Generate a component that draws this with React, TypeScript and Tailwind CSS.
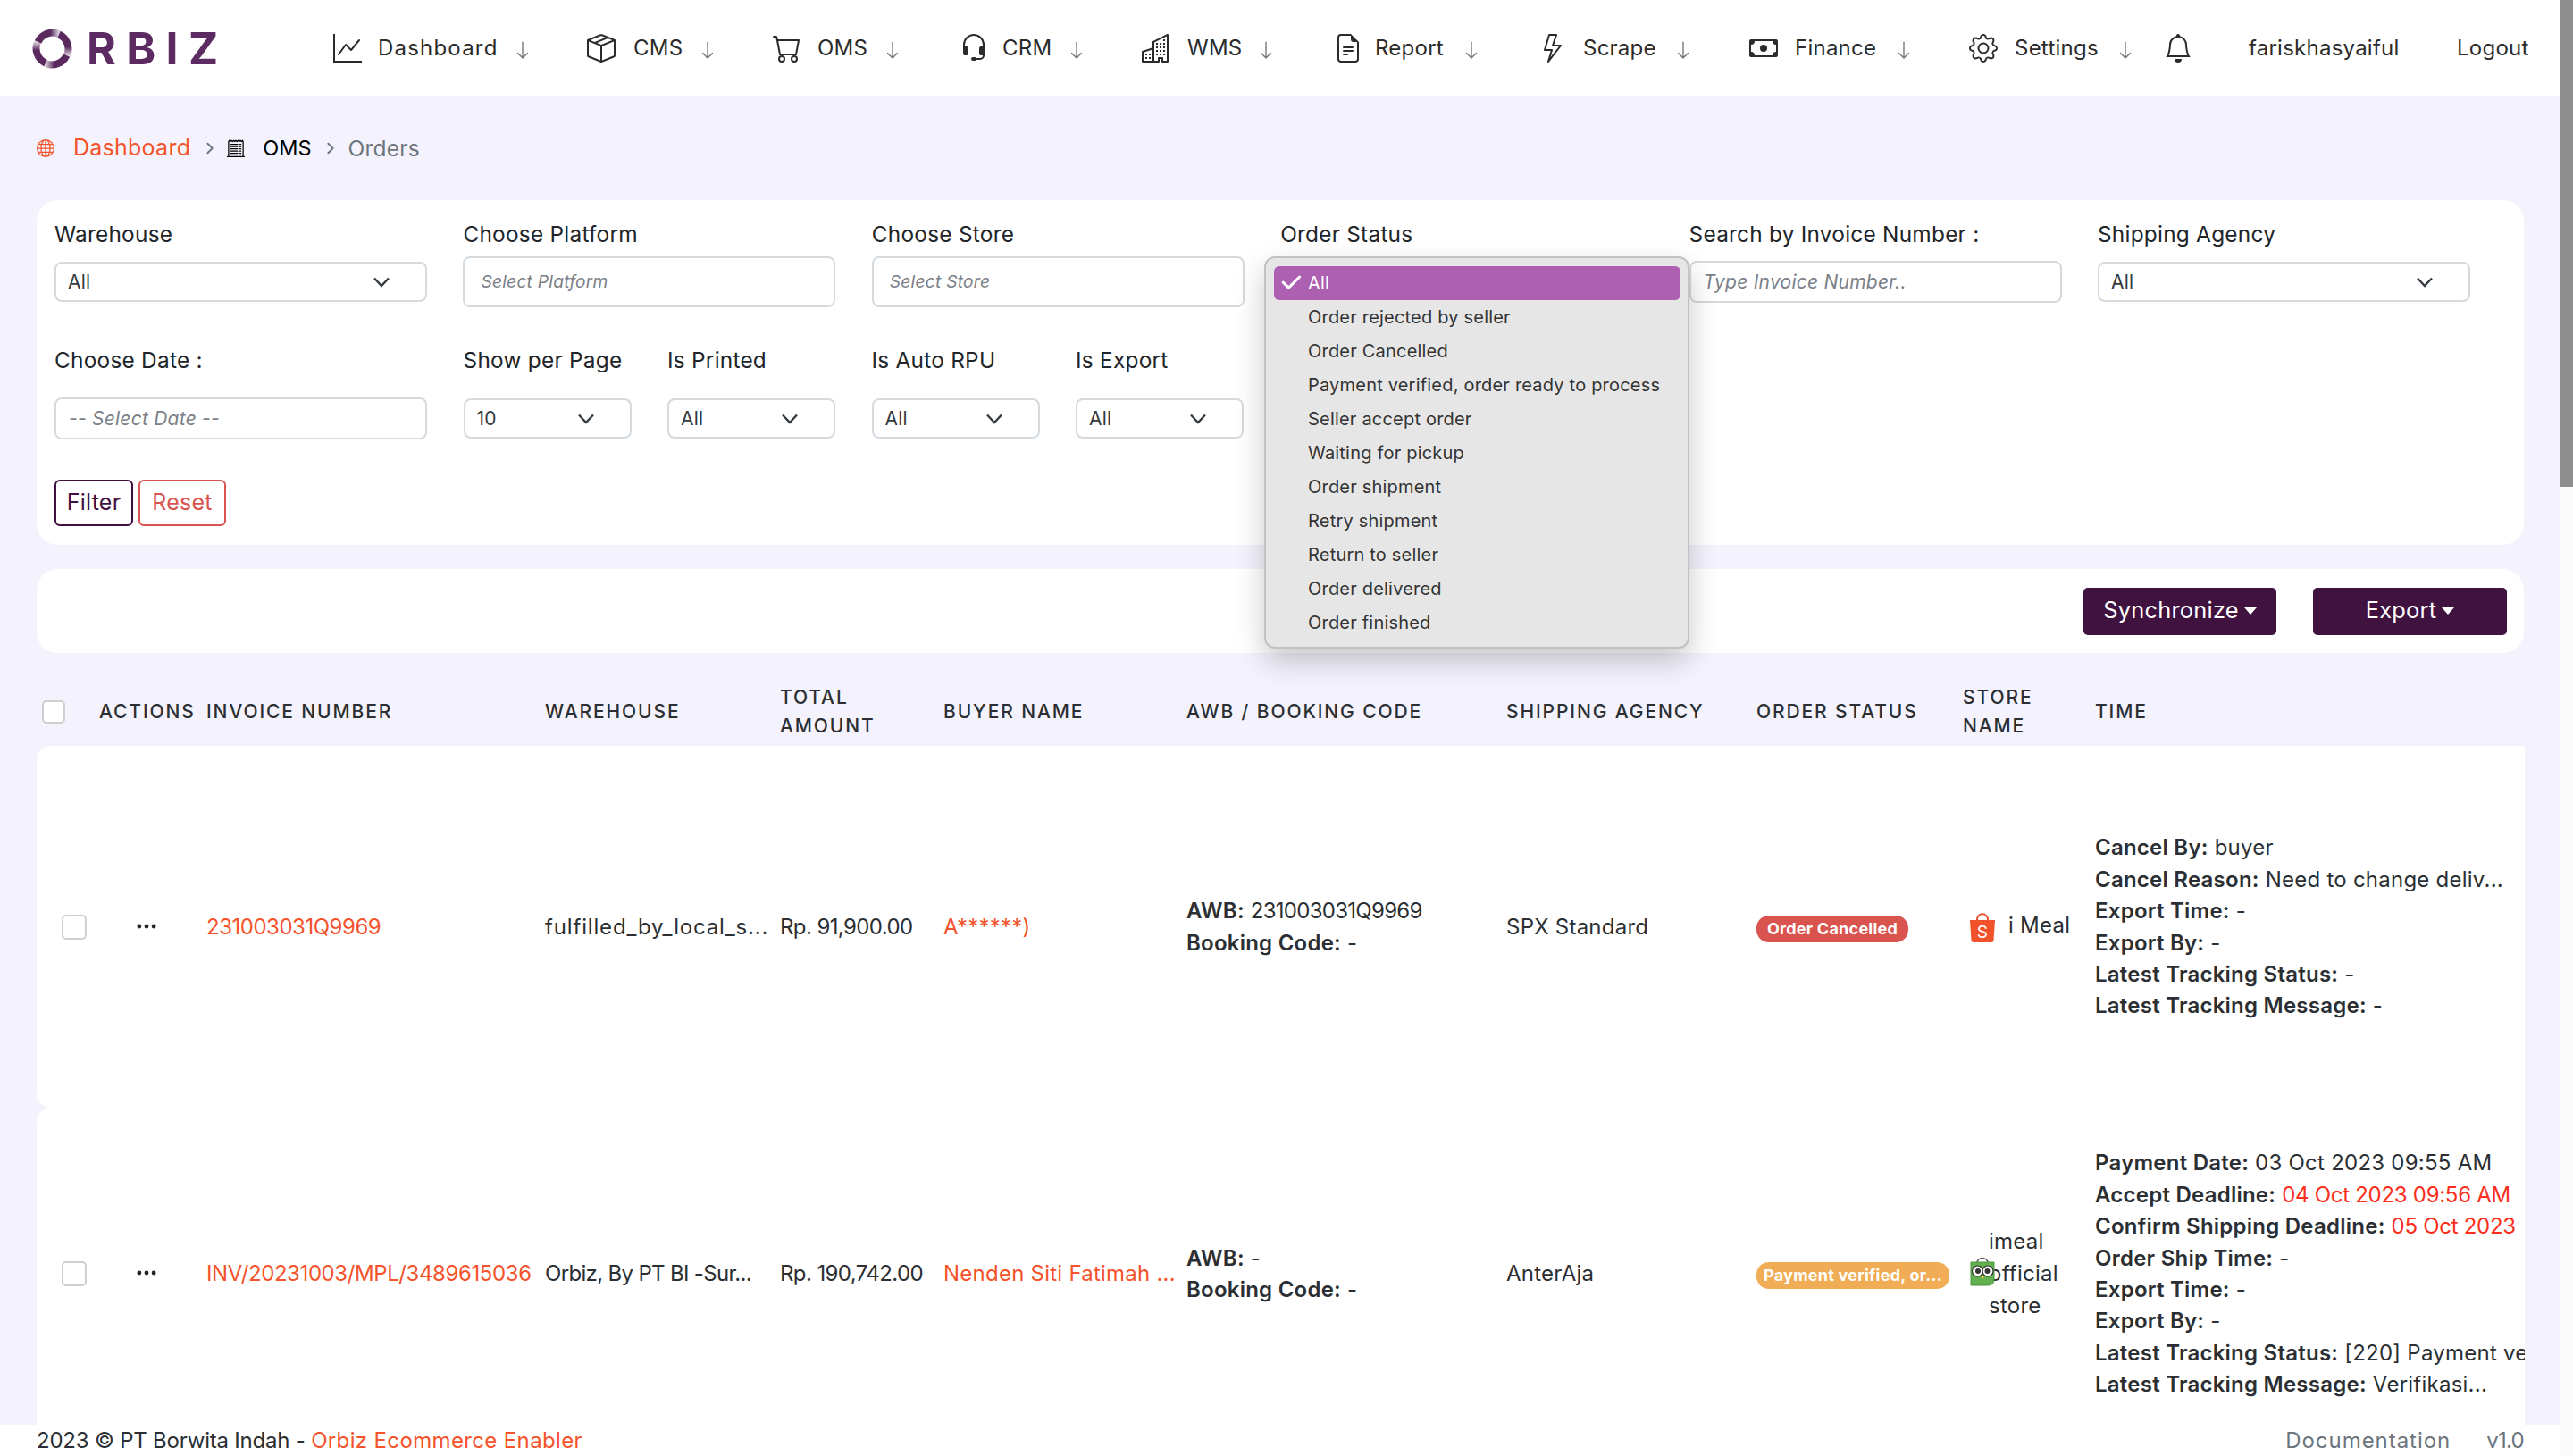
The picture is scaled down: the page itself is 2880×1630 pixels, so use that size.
import {
  BsArrowDown,
  BsBell,
  BsBoxSeam,
  BsBuildings,
  BsCart,
  BsCash,
  BsCheck2,
  BsChevronRight,
  BsFileEarmarkText,
  BsGear,
  BsGlobe,
  BsGraphUp,
  BsHeadset,
  BsLightning,
  BsReceiptCutoff,
  BsThreeDots,
} from "react-icons/bs";

const NAV = [
  { label: "Dashboard", Icon: BsGraphUp, box: "w-[284px] grid-cols-[50px_151px_22px]", icon: "", text: "tracking-[0.05em]" },
  { label: "CMS", Icon: BsBoxSeam, box: "w-[208px] grid-cols-[52px_72px_22px]", icon: "", text: "" },
  { label: "OMS", Icon: BsCart, box: "w-[209px] grid-cols-[50px_73px_22px]", icon: "", text: "" },
  { label: "CRM", Icon: BsHeadset, box: "w-[204px] grid-cols-[48px_72px_22px]", icon: "", text: "" },
  { label: "WMS", Icon: BsBuildings, box: "w-[215px] grid-cols-[51px_77px_22px]", icon: "", text: "" },
  { label: "Report", Icon: BsFileEarmarkText, box: "w-[233px] grid-cols-[46px_97px_22px]", icon: "", text: "" },
  { label: "Scrape", Icon: BsLightning, box: "w-[232px] grid-cols-[46px_101px_22px]", icon: "-ml-[4px]", text: "" },
  { label: "Finance", Icon: BsCash, box: "w-[246px] grid-cols-[51px_111px_22px]", icon: "", text: "" },
  { label: "Settings", Icon: BsGear, box: "w-[218px] grid-cols-[51px_113px_22px]", icon: "", text: "" },
];

const STATUSES = [
  "Order rejected by seller",
  "Order Cancelled",
  "Payment verified, order ready to process",
  "Seller accept order",
  "Waiting for pickup",
  "Order shipment",
  "Retry shipment",
  "Return to seller",
  "Order delivered",
  "Order finished",
];

function Logo() {
  const arcs = [0, 90, 180, 270];
  return (
    <div className="flex items-center ml-[36px] w-[337px]">
      <svg width="45" height="45" viewBox="0 0 45 45">
        <defs>
          <linearGradient id="fade" x1="0" y1="0" x2="1" y2="0">
            <stop offset="0" stopColor="#5a2a5e" />
            <stop offset="0.6" stopColor="#5a2a5e" />
            <stop offset="1" stopColor="#ddd2df" />
          </linearGradient>
        </defs>
        {arcs.map((deg) => (
          <path
            key={deg}
            d="M6.5 15 A18 18 0 0 1 30 6"
            fill="none"
            stroke="url(#fade)"
            strokeWidth="8"
            transform={`rotate(${deg} 22.5 22.5)`}
          />
        ))}
      </svg>
      <span className="ml-[16px] text-[50px] leading-none font-bold tracking-[0.227em] text-[#5c2b62]">RBIZ</span>
    </div>
  );
}

function NavBar() {
  return (
    <nav className="h-[108px] shrink-0 bg-white flex items-center text-[24px] text-[#2b2b2b]">
      <Logo />
      {NAV.map(({ label, Icon, box, icon, text }) => (
        <div key={label} className={`grid items-center ${box}`}>
          <Icon size={32} className={`text-[#2b2b2b] ${icon}`} />
          <span className={text}>{label}</span>
          <BsArrowDown size={22} className="text-[#777777] mt-[4px]" />
        </div>
      ))}
      <div className="w-[95px]">
        <BsBell size={32} />
      </div>
      <span className="w-[233px]">fariskhasyaiful</span>
      <span>Logout</span>
    </nav>
  );
}

function Crumb() {
  return <BsChevronRight size={14} strokeWidth={1.2} className="text-[#6c757d]" />;
}

function Breadcrumb() {
  return (
    <div className="h-[116px] flex items-center text-[25px] tracking-[0.01em]">
      <BsGlobe size={20} className="text-[#f4532b]" />
      <span className="ml-[21px] text-[#f4532b]">Dashboard</span>
      <span className="ml-[15px]">
        <Crumb />
      </span>
      <BsReceiptCutoff size={20} className="ml-[12px] text-black" />
      <span className="ml-[20px] text-black text-[23.5px] tracking-normal">OMS</span>
      <span className="ml-[15px]">
        <Crumb />
      </span>
      <span className="ml-[12px] text-[#6c757d] text-[24.5px]">Orders</span>
    </div>
  );
}

function Chevron() {
  return (
    <svg width="20" height="12" viewBox="0 0 20 12" className="shrink-0 mr-[39px]">
      <path d="M2 1.5 L10 10 L18 1.5" fill="none" stroke="#343a40" strokeWidth="2.4" />
    </svg>
  );
}

function Label({ children }: { children: string }) {
  return <div className="h-[34px] leading-[33px] text-[24.4px] text-[#212529]">{children}</div>;
}

function FakeSelect({ value }: { value: string }) {
  return (
    <div className="h-[45px] border-2 border-[#d5dadf] rounded-[8px] bg-white flex items-center justify-between pl-[13px] text-[21px] text-[#343a40]">
      <span>{value}</span>
      <Chevron />
    </div>
  );
}

function FakeInput({ placeholder, tall }: { placeholder: string; tall?: boolean }) {
  return (
    <div
      className={`border-2 border-[#d5dadf] rounded-[8px] bg-white flex items-center italic text-[#7b8087] ${
        tall ? "h-[57px] pl-[18px] text-[19.2px]" : "h-[47px] pl-[14px] text-[21px]"
      }`}
    >
      {placeholder}
    </div>
  );
}

function StatusMenu() {
  return (
    <div className="absolute z-10 left-[1374px] top-[63px] w-[476px] h-[439px] rounded-[12px] border-2 border-[#c2c2c2] bg-[#e6e6e6] shadow-[0_14px_32px_rgba(0,0,0,0.22)] pl-[9px] pr-[8px] pt-[9px] text-[20px] tracking-[0.01em] text-[#333333]">
      <div className="h-[38px] rounded-[6px] bg-[#ad5fb2] text-white flex items-center pl-[5px]">
        <BsCheck2 size={28} strokeWidth={0.8} />
        <span className="ml-[5px]">All</span>
      </div>
      {STATUSES.map((s) => (
        <div key={s} className="h-[38px] leading-[38px] pl-[38px] whitespace-nowrap">
          {s}
        </div>
      ))}
    </div>
  );
}

function FilterCard() {
  return (
    <section className="relative h-[386px] rounded-[24px] bg-white pl-[20px] pt-[22px]">
      <div className="grid grid-cols-[repeat(6,417px)] gap-x-[40.4px]">
        <div>
          <Label>Warehouse</Label>
          <div className="h-[57px] mt-[7px] flex flex-col justify-center">
            <FakeSelect value="All" />
          </div>
        </div>
        <div>
          <Label>Choose Platform</Label>
          <div className="mt-[7px]">
            <FakeInput placeholder="Select Platform" tall />
          </div>
        </div>
        <div>
          <Label>Choose Store</Label>
          <div className="mt-[7px]">
            <FakeInput placeholder="Select Store" tall />
          </div>
        </div>
        <div>
          <Label>Order Status</Label>
        </div>
        <div>
          <Label>Search by Invoice Number :</Label>
          <div className="h-[57px] mt-[7px] flex flex-col justify-center">
            <FakeInput placeholder="Type Invoice Number.." />
          </div>
        </div>
        <div>
          <Label>Shipping Agency</Label>
          <div className="h-[57px] mt-[7px] flex flex-col justify-center">
            <FakeSelect value="All" />
          </div>
        </div>
      </div>

      <div className="grid grid-cols-[417px_188px_188px_188px_188px] gap-x-[40.5px] mt-[43px]">
        <div>
          <Label>Choose Date :</Label>
          <div className="mt-[24px]">
            <FakeInput placeholder="-- Select Date --" />
          </div>
        </div>
        {[
          ["Show per Page", "10"],
          ["Is Printed", "All"],
          ["Is Auto RPU", "All"],
          ["Is Export", "All"],
        ].map(([label, value]) => (
          <div key={label}>
            <Label>{label}</Label>
            <div className="h-[47px] mt-[24px] flex flex-col justify-center">
              <FakeSelect value={value} />
            </div>
          </div>
        ))}
      </div>

      <div className="flex gap-[6px] mt-[45px] text-[25px]">
        <button className="w-[88px] h-[52px] rounded-[6px] border-2 border-[#3f1040] text-[#3f1040]">Filter</button>
        <button className="w-[98px] h-[52px] rounded-[6px] border-2 border-[#d9534f] text-[#d9534f]">Reset</button>
      </div>

      <StatusMenu />
    </section>
  );
}

function Caret() {
  return <span className="inline-block ml-[6px] mb-[4px] border-x-[7px] border-x-transparent border-t-[8px] border-t-white" />;
}

function Toolbar() {
  return (
    <section className="mt-[27px] h-[94px] rounded-[24px] bg-white flex items-center justify-end gap-[41px] pr-[19px] text-[25.4px] text-white">
      <button className="w-[216px] h-[53px] pb-[2px] rounded-[5px] bg-[#3f1240]">
        Synchronize
        <Caret />
      </button>
      <button className="w-[217px] h-[53px] pb-[2px] rounded-[5px] bg-[#3f1240]">
        Export
        <Caret />
      </button>
    </section>
  );
}

function ShopeeIcon() {
  return (
    <svg width="30" height="36" viewBox="0 0 30 36" className="shrink-0">
      <path d="M9 10 C9 1 21 1 21 10" fill="none" stroke="#ee4d2d" strokeWidth="2" />
      <path d="M1 10 H29 L27.5 33 Q27.3 35 25 35 H5 Q2.7 35 2.5 33 Z" fill="#f1512b" />
      <text x="15" y="30" fontSize="19" fill="#ffffff" textAnchor="middle" fontFamily="Inter, sans-serif">
        S
      </text>
    </svg>
  );
}

function TokopediaIcon() {
  return (
    <svg width="28" height="32" viewBox="0 0 28 32" className="absolute left-0 top-[36px]">
      <path d="M8 6 C8 -1 20 -1 20 6" fill="none" stroke="#4b4b4b" strokeWidth="1.6" />
      <path d="M1 5 H27 V24 Q27 31 20 31 H1 Z" fill="#62b04f" stroke="#4a9440" strokeWidth="1" />
      <circle cx="8.5" cy="15" r="6" fill="#ffffff" stroke="#333333" strokeWidth="1.2" />
      <circle cx="20" cy="15" r="6" fill="#ffffff" stroke="#333333" strokeWidth="1.2" />
      <circle cx="9" cy="15" r="3" fill="#333333" />
      <circle cx="19.5" cy="15" r="3" fill="#333333" />
      <path d="M12.5 21 H16 L14.2 24 Z" fill="#f2c230" />
    </svg>
  );
}

function Bold({ children }: { children: string }) {
  return <span className="font-semibold">{children}</span>;
}

function TimeLines({ lines }: { lines: [string, string, boolean?][] }) {
  return (
    <div className="w-[481px] overflow-hidden whitespace-nowrap">
      {lines.map(([k, v, red]) => (
        <div key={k} className="h-[35.4px] leading-[35.4px]">
          <Bold>{k}</Bold> <span className={red ? "text-[#fb2f1c] tracking-[-0.012em]" : ""}>{v}</span>
        </div>
      ))}
    </div>
  );
}

function Awb({ awb }: { awb: string }) {
  return (
    <div className="leading-[35.4px]">
      <div>
        <Bold>AWB:</Bold> <span className="tracking-[-0.03em]">{awb}</span>
      </div>
      <div>
        <Bold>Booking Code:</Bold> -
      </div>
    </div>
  );
}

function RowCheck() {
  return <div className="ml-[28px] w-[28px] h-[28px] rounded-[5px] border-2 border-[#cfcfcf] bg-white" />;
}

function Dots() {
  return <BsThreeDots size={26} className="ml-[40px] mb-[2px] text-[#212529]" />;
}

function OrdersTable() {
  const th = "font-medium uppercase text-left align-middle leading-[32px] tracking-[0.09em]";
  return (
    <table className="mt-[28px] w-[2785px] table-fixed border-separate border-spacing-0 text-[24px] text-[#2b2f33]">
      <colgroup>
        <col className="w-[70px]" />
        <col className="w-[120px]" />
        <col className="w-[379px]" />
        <col className="w-[263px]" />
        <col className="w-[183px]" />
        <col className="w-[272px]" />
        <col className="w-[358px]" />
        <col className="w-[280px]" />
        <col className="w-[231px]" />
        <col className="w-[148px]" />
        <col className="w-[481px]" />
      </colgroup>
      <thead className="text-[21px] text-[#2b2f33]">
        <tr className="h-[76px]">
          <th className="align-middle">
            <div className="ml-[6px] w-[26px] h-[26px] rounded-[5px] border-2 border-[#cfcfcf] bg-white" />
          </th>
          <th className={th}>Actions</th>
          <th className={th}>Invoice Number</th>
          <th className={th}>Warehouse</th>
          <th className={th}>
            Total
            <br />
            Amount
          </th>
          <th className={th}>Buyer Name</th>
          <th className={th}>Awb / Booking Code</th>
          <th className={th}>Shipping Agency</th>
          <th className={th}>Order Status</th>
          <th className={th}>
            Store
            <br />
            Name
          </th>
          <th className={th}>Time</th>
        </tr>
      </thead>
      <tbody className="[&_td]:bg-white [&_td]:align-middle [&_td]:whitespace-nowrap">
        <tr className="h-[405px]">
          <td className="rounded-l-[16px]">
            <RowCheck />
          </td>
          <td>
            <Dots />
          </td>
          <td className="text-[#f4532b] tracking-[-0.02em]">231003031Q9969</td>
          <td className="tracking-[0.035em]">fulfilled_by_local_s...</td>
          <td className="tracking-[-0.025em]">Rp. 91,900.00</td>
          <td className="text-[#f4532b]">A******)</td>
          <td>
            <Awb awb="231003031Q9969" />
          </td>
          <td>SPX Standard</td>
          <td>
            <span className="inline-flex items-center h-[30px] mt-[6px] px-[12px] rounded-[14px] bg-[#d9534f] text-white text-[18px] font-bold">
              Order Cancelled
            </span>
          </td>
          <td>
            <div className="flex items-start gap-[14px] ml-[7px]">
              <ShopeeIcon />
              <span className="leading-[32px]">i Meal</span>
            </div>
          </td>
          <td>
            <TimeLines
              lines={[
                ["Cancel By:", "buyer"],
                ["Cancel Reason:", "Need to change deliv..."],
                ["Export Time:", "-"],
                ["Export By:", "-"],
                ["Latest Tracking Status:", "-"],
                ["Latest Tracking Message:", "-"],
              ]}
            />
          </td>
        </tr>
        <tr className="h-[372px]">
          <td className="rounded-l-[16px]">
            <RowCheck />
          </td>
          <td>
            <Dots />
          </td>
          <td className="text-[#f4532b] tracking-[-0.017em]">INV/20231003/MPL/3489615036</td>
          <td className="tracking-[-0.028em]">Orbiz, By PT BI -Sur...</td>
          <td className="tracking-[-0.025em]">Rp. 190,742.00</td>
          <td className="text-[#f4532b]">Nenden Siti Fatimah ...</td>
          <td>
            <Awb awb="-" />
          </td>
          <td>AnterAja</td>
          <td>
            <span className="inline-flex items-center h-[30px] mt-[2px] px-[8px] rounded-[14px] bg-[#f0ad55] text-white text-[18px] font-bold">
              Payment verified, or...
            </span>
          </td>
          <td>
            <div className="relative ml-[8px] pl-[21px] leading-[36px]">
              <TokopediaIcon />
              <div>imeal</div>
              <div>official</div>
              <div>store</div>
            </div>
          </td>
          <td>
            <TimeLines
              lines={[
                ["Payment Date:", "03 Oct 2023 09:55 AM"],
                ["Accept Deadline:", "04 Oct 2023 09:56 AM", true],
                ["Confirm Shipping Deadline:", "05 Oct 2023", true],
                ["Order Ship Time:", "-"],
                ["Export Time:", "-"],
                ["Export By:", "-"],
                ["Latest Tracking Status:", "[220] Payment verified, order ready to process"],
                ["Latest Tracking Message:", "Verifikasi..."],
              ]}
            />
          </td>
        </tr>
      </tbody>
    </table>
  );
}

function Footer() {
  return (
    <footer className="h-[35px] shrink-0 bg-white flex items-center justify-between px-[41px] text-[24px] text-[#2b2f33]">
      <div className="tracking-[-0.009em]">
        2023 © PT Borwita Indah - <span className="text-[#f4532b] tracking-[0.015em]">Orbiz Ecommerce Enabler</span>
      </div>
      <div className="flex gap-[40px] text-[#6c757d]">
        <span className="tracking-[0.04em]">Documentation</span>
        <span className="tracking-[-0.03em]">v1.0</span>
      </div>
    </footer>
  );
}

export default function App() {
  return (
    <div className="h-screen w-screen overflow-hidden flex bg-[#f4f3fd] font-[Inter,sans-serif] tracking-[0.015em]">
      <div className="flex-1 min-w-0 flex flex-col">
        <NavBar />
        <main className="flex-1 min-h-0 overflow-hidden px-[41px]">
          <Breadcrumb />
          <FilterCard />
          <Toolbar />
          <OrdersTable />
        </main>
        <Footer />
      </div>
      {/* page scrollbar */}
      <div className="w-[14px] shrink-0 bg-[#fafafa]">
        <div className="h-[545px] bg-[#8e8e8e]" />
      </div>
    </div>
  );
}
